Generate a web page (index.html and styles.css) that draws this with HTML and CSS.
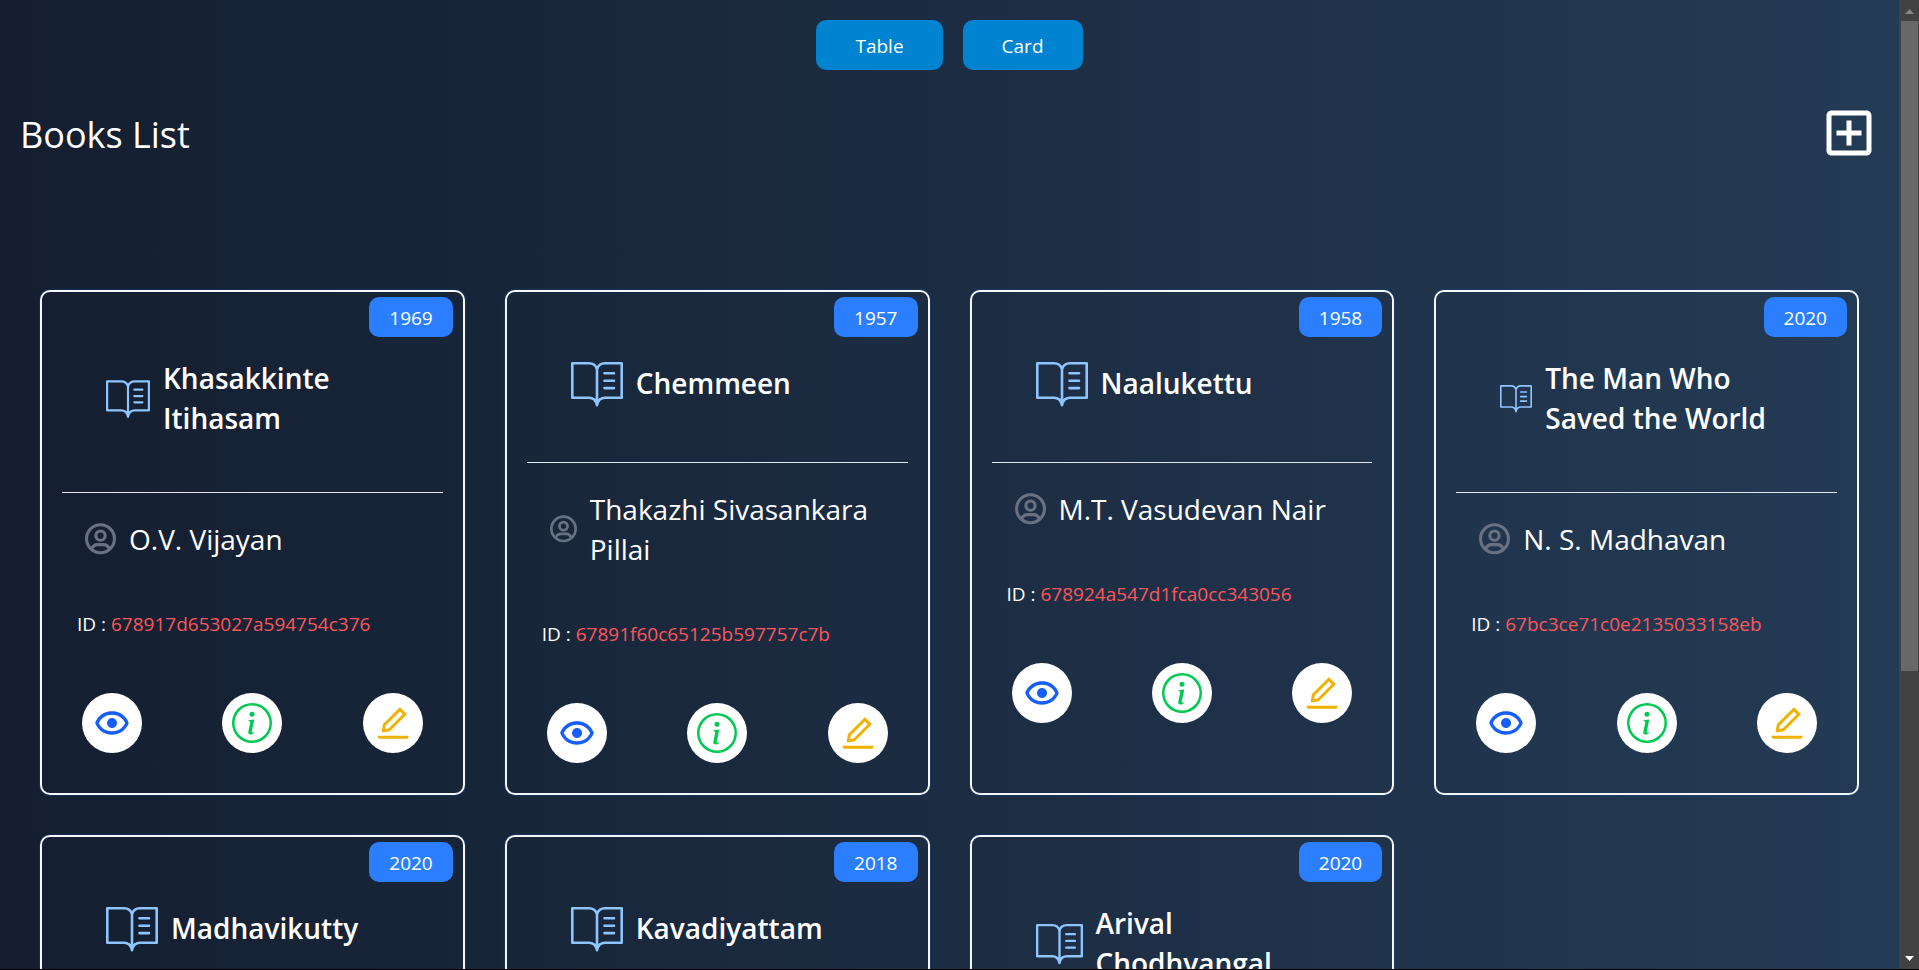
FILE: index.html
```html
<!DOCTYPE html>
<html lang="en">
<head>
<meta charset="utf-8">
<title>Books List</title>
<link rel="stylesheet" href="styles.css">
</head>
<body>
<svg class="sprite" aria-hidden="true">
  <symbol id="book" viewBox="0 -4 52 50">
    <path d="M1.3 1.3H18c4 0 6.8 1.8 8 6 1.200-4.200 4-6 8-6H50.700V35.700H34c-4 0-6.800 1.800-8 7.500-1.200-5.700-4-7.500-8-7.500H1.300ZM26 7V43M33.500 11.200H43M33.500 18.700H43M33.500 26.100H43" fill="none" stroke="currentColor" stroke-width="2.600" stroke-linecap="round" stroke-linejoin="round"/>
    <path d="M22 36c2 1.500 3.400 4 4 8 .6-4 2-6.500 4-8-2 .3-3 .8-4 2-1-1.200-2-1.700-4-2Z" fill="currentColor"/>
  </symbol>
  <symbol id="user" viewBox="2 2 20 21">
    <g fill="none" stroke="currentColor" stroke-width="2">
      <circle cx="12" cy="12" r="9"/>
      <circle cx="12" cy="10" r="3"/>
      <path d="M6.200 18.800C7 16.700 8.200 15.800 10 15.800h4c1.800 0 3 .9 3.800 3"/>
    </g>
  </symbol>
  <symbol id="eye" viewBox="0 0 24 24">
    <path d="M12 9a3.020 3.020 0 0 0-3 3c0 1.642 1.358 3 3 3 1.641 0 3-1.358 3-3 0-1.641-1.359-3-3-3z"/>
    <path d="M12 5c-7.633 0-9.927 6.617-9.948 6.684L1.946 12l.105.316C2.073 12.383 4.367 19 12 19s9.927-6.617 9.948-6.684l.106-.316-.105-.316C21.927 11.617 19.633 5 12 5zm0 12c-5.351 0-7.424-3.846-7.926-5C4.578 10.842 6.652 7 12 7c5.351 0 7.424 3.846 7.926 5-.504 1.158-2.578 5-7.926 5z"/>
  </symbol>
  <symbol id="info" viewBox="0 0 16 16">
    <path d="M8 15A7 7 0 1 1 8 1a7 7 0 0 1 0 14m0 1A8 8 0 1 0 8 0a8 8 0 0 0 0 16"/>
    <path d="m8.930 6.588-2.290.287-.082.380.450.083c.294.070.352.176.288.469l-.738 3.468c-.194.897.105 1.319.808 1.319.545 0 1.178-.252 1.465-.598l.088-.416c-.2.176-.492.246-.686.246-.275 0-.375-.193-.304-.533zM9 4.500a1 1 0 1 1-2 0 1 1 0 0 1 2 0"/>
  </symbol>
  <symbol id="edit" viewBox="0 0 1024 1024">
    <path d="M257.700 752c2 0 4-.2 6-.5L431.900 722c2-.4 3.900-1.300 5.300-2.800l423.900-423.900a9.960 9.960 0 0 0 0-14.100L694.900 114.900c-1.900-1.900-4.400-2.900-7.100-2.900s-5.200 1-7.100 2.900L256.800 538.800c-1.500 1.500-2.400 3.300-2.800 5.300l-29.500 168.200a33.500 33.500 0 0 0 9.400 29.800c6.600 6.400 14.900 9.900 23.800 9.900zm67.400-174.400L687.800 215l73.300 73.300-362.700 362.600-88.900 15.700 15.600-89z"/>
    <path d="M120 836h784a8 8 0 0 1 8 8c0 36-24 72-60 72H172c-36 0-60-36-60-72a8 8 0 0 1 8-8z"/>
  </symbol>
</svg>

<div class="page">
  <main class="content">
    <nav class="views">
      <button class="view-button" type="button">Table</button>
      <button class="view-button" type="button">Card</button>
    </nav>

    <header class="heading">
      <h1 class="heading-text">Books List</h1>
      <a class="add" href="#create" aria-label="Add">
        <svg class="add-icon" viewBox="0 0 24 24"><path d="M19 3H5c-1.110 0-2 .9-2 2v14c0 1.100.890 2 2 2h14c1.100 0 2-.9 2-2V5c0-1.100-.9-2-2-2zm0 16H5V5h14v14zm-8-2h2v-4h4v-2h-4V7h-2v4H7v2h4z"/></svg>
      </a>
    </header>

    <section class="cards">
      <article class="card">
        <span class="year">1969</span>
        <div class="title-row"><svg class="book-icon book-icon-medium"><use href="#book"/></svg><h2 class="title">Khasakkinte Itihasam</h2></div>
        <div class="author-row"><svg class="user-icon"><use href="#user"/></svg><span>O.V. Vijayan</span></div>
        <p class="book-id">ID : <span class="id-value">678917d653027a594754c376</span></p>
        <div class="actions">
          <a class="action action-view" href="#view" aria-label="View"><svg class="action-icon"><use href="#eye"/></svg></a>
          <a class="action action-info" href="#details" aria-label="Details"><svg class="action-icon"><use href="#info"/></svg></a>
          <a class="action action-edit" href="#edit-book" aria-label="Edit"><svg class="action-icon"><use href="#edit"/></svg></a>
        </div>
      </article>

      <article class="card">
        <span class="year">1957</span>
        <div class="title-row"><svg class="book-icon"><use href="#book"/></svg><h2 class="title">Chemmeen</h2></div>
        <div class="author-row"><svg class="user-icon user-icon-small"><use href="#user"/></svg><span>Thakazhi Sivasankara Pillai</span></div>
        <p class="book-id">ID : <span class="id-value">67891f60c65125b597757c7b</span></p>
        <div class="actions">
          <a class="action action-view" href="#view" aria-label="View"><svg class="action-icon"><use href="#eye"/></svg></a>
          <a class="action action-info" href="#details" aria-label="Details"><svg class="action-icon"><use href="#info"/></svg></a>
          <a class="action action-edit" href="#edit-book" aria-label="Edit"><svg class="action-icon"><use href="#edit"/></svg></a>
        </div>
      </article>

      <article class="card">
        <span class="year">1958</span>
        <div class="title-row"><svg class="book-icon"><use href="#book"/></svg><h2 class="title">Naalukettu</h2></div>
        <div class="author-row"><svg class="user-icon"><use href="#user"/></svg><span>M.T. Vasudevan Nair</span></div>
        <p class="book-id">ID : <span class="id-value">678924a547d1fca0cc343056</span></p>
        <div class="actions">
          <a class="action action-view" href="#view" aria-label="View"><svg class="action-icon"><use href="#eye"/></svg></a>
          <a class="action action-info" href="#details" aria-label="Details"><svg class="action-icon"><use href="#info"/></svg></a>
          <a class="action action-edit" href="#edit-book" aria-label="Edit"><svg class="action-icon"><use href="#edit"/></svg></a>
        </div>
      </article>

      <article class="card">
        <span class="year">2020</span>
        <div class="title-row"><svg class="book-icon book-icon-small"><use href="#book"/></svg><h2 class="title">The Man Who Saved the World</h2></div>
        <div class="author-row"><svg class="user-icon"><use href="#user"/></svg><span>N. S. Madhavan</span></div>
        <p class="book-id">ID : <span class="id-value">67bc3ce71c0e2135033158eb</span></p>
        <div class="actions">
          <a class="action action-view" href="#view" aria-label="View"><svg class="action-icon"><use href="#eye"/></svg></a>
          <a class="action action-info" href="#details" aria-label="Details"><svg class="action-icon"><use href="#info"/></svg></a>
          <a class="action action-edit" href="#edit-book" aria-label="Edit"><svg class="action-icon"><use href="#edit"/></svg></a>
        </div>
      </article>

      <article class="card">
        <span class="year">2020</span>
        <div class="title-row"><svg class="book-icon"><use href="#book"/></svg><h2 class="title">Madhavikutty</h2></div>
      </article>

      <article class="card">
        <span class="year">2018</span>
        <div class="title-row"><svg class="book-icon"><use href="#book"/></svg><h2 class="title">Kavadiyattam</h2></div>
      </article>

      <article class="card">
        <span class="year">2020</span>
        <div class="title-row"><svg class="book-icon book-icon-large"><use href="#book"/></svg><h2 class="title">Arival Chodhyangal</h2></div>
      </article>
    </section>
  </main>

  <div class="scrollbar" aria-hidden="true">
    <svg class="arrow arrow-up" viewBox="0 0 9 5"><path d="M0 5 4.500 0 9 5Z"/></svg>
    <div class="track"><div class="thumb"></div></div>
    <svg class="arrow arrow-down" viewBox="0 0 9 5"><path d="M0 0 4.500 5 9 0Z"/></svg>
  </div>
</div>
</body>
</html>
```

FILE: styles.css
```css
* {
  box-sizing: border-box;
}

body {
  margin: 0;
  background: #000;
  color: #fff;
  font-family: "Open Sans", "Noto Sans", sans-serif;
  font-size: 19px;
  line-height: 30px;
}

h1, h2, p {
  margin: 0;
}

svg {
  display: block;
  fill: currentColor;
}

.sprite {
  display: none;
}

.page {
  display: flex;
  height: 100vh;
  border-bottom: 1px solid #000;
}

.content {
  flex: 1;
  min-width: 0;
  overflow-y: auto;
  scrollbar-width: none;
  background: linear-gradient(to right, #141e30, #243b55);
}

.views {
  display: flex;
  justify-content: center;
  gap: 20px;
  padding-top: 20px;
}

.view-button {
  padding: 11px 39px 9px;
  border: 0;
  border-radius: 10px;
  background: #0084d1;
  color: #fff;
  font: inherit;
}

.heading {
  display: flex;
  align-items: center;
  justify-content: space-between;
  padding: 33px 20px;
}

.heading-text {
  padding-top: 4px;
  font-size: 36px;
  font-weight: 400;
  line-height: 56px;
}

.add {
  color: #fff;
}

.add-icon {
  width: 60px;
  height: 60px;
}

.cards {
  display: grid;
  grid-template-columns: repeat(4, 1fr);
  gap: 40px;
  padding: 94px 40px 40px;
}

.card {
  position: relative;
  padding: 20px 20px 30px;
  border: 2px solid #f3f6fb;
  border-radius: 10px;
  box-shadow: 0 0 2px #1c4f9c;
}

.year {
  position: absolute;
  top: 5px;
  right: 10px;
  padding: 6px 20px 4px;
  border-radius: 10px;
  background: #2b7fff;
}

.title-row {
  display: flex;
  align-items: center;
  gap: 13px;
  min-height: 151px;
  padding: 46px 40px 54px 44px;
  border-bottom: 1px solid #e5e7eb;
}

.title {
  font-size: 28px;
  font-weight: 600;
  line-height: 40px;
}

.book-icon {
  flex: none;
  width: 52px;
  height: 50px;
  color: #8ec5ff;
}

.book-icon-large {
  width: 47px;
}

.book-icon-medium {
  width: 44px;
}

.book-icon-small {
  width: 32px;
}

.author-row {
  display: flex;
  align-items: center;
  gap: 13px;
  padding: 26px 23px 50px;
  font-size: 28px;
  line-height: 40px;
}

.user-icon {
  flex: none;
  width: 31px;
  height: 33px;
  color: #6a7282;
}

.user-icon-small {
  width: 27px;
  height: 29px;
}

.book-id {
  padding: 0 15px;
}

.id-value {
  color: #fb575c;
}

.actions {
  display: flex;
  justify-content: space-between;
  padding: 54px 20px 0;
}

.action {
  padding: 10px;
  border-radius: 50%;
  background: #fff;
}

.action-icon {
  width: 40px;
  height: 40px;
}

.action-view {
  color: #155dfc;
}

.action-info {
  color: #00c951;
}

.action-edit {
  color: #f0b100;
}

.scrollbar {
  display: flex;
  flex-direction: column;
  align-items: center;
  flex: none;
  width: 20px;
  padding: 9px 0 8px;
  background: #424242;
}

.arrow {
  width: 9px;
  height: 5px;
}

.arrow-up {
  color: #868686;
}

.track {
  flex: 1;
  width: 17px;
  padding: 7px 0;
}

.thumb {
  height: 70%;
  background: #686868;
}
```
